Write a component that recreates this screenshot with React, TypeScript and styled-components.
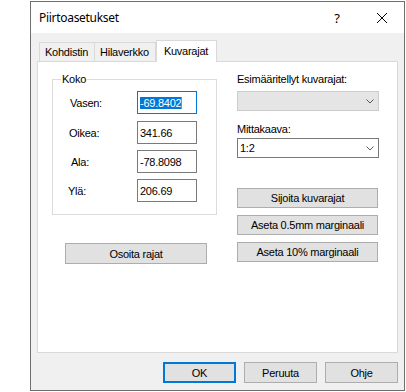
import React from 'react'
import styled, { createGlobalStyle } from 'styled-components'

const GlobalStyle = createGlobalStyle`
    html, body {
        margin: 0;
        padding: 0;
        background: #ffffff;
    }
    body {
        font-family: "Liberation Sans", Arial, sans-serif;
        font-size: 11px;
        letter-spacing: -0.25px;
        color: #000000;
    }
`

const Dialog = styled.div`
    margin: 1px 0 0 30px;
    width: 375px;
    height: 390px;
    box-sizing: border-box;
    border: 1px solid #6f6f6f;
    background: #f0f0f0;
    display: flex;
    flex-direction: column;
`

const TitleBar = styled.div`
    height: 31px;
    flex-shrink: 0;
    background: #ffffff;
    display: flex;
    align-items: center;
    padding-left: 8px;
    font-family: "Noto Sans", "Open Sans", sans-serif;
    font-size: 12px;
    letter-spacing: -0.3px;
`

const TitleText = styled.div`
    flex: 1;
    margin-top: -1px;
`

const TitleButton = styled.div<{ $width: number }>`
    width: ${p => p.$width}px;
    height: 31px;
    display: flex;
    align-items: center;
    justify-content: center;
    font-size: 13px;
`

const Body = styled.div`
    flex: 1;
    display: flex;
    flex-direction: column;
    padding: 7px 6px 0 6px;
`

const TabStrip = styled.div`
    display: flex;
    align-items: flex-end;
    height: 21px;
    padding-left: 2px;
`

const Tab = styled.div<{ $active?: boolean }>`
    height: ${p => (p.$active ? 22 : 19)}px;
    padding: 0 ${p => (p.$active ? 8 : 6)}px 0 ${p => (p.$active ? 7 : 5)}px;
    margin-bottom: ${p => (p.$active ? -1 : 0)}px;
    background: ${p => (p.$active ? '#ffffff' : '#f0f0f0')};
    border: 1px solid #d9d9d9;
    border-bottom: none;
    border-left: ${p => (p.$active ? '1px solid #d9d9d9' : 'none')};
    display: flex;
    align-items: ${p => (p.$active ? 'flex-start' : 'center')};
    padding-top: ${p => (p.$active ? 4 : 0)}px;
    box-sizing: border-box;
    position: relative;
    z-index: ${p => (p.$active ? 1 : 0)};
    &:first-child {
        border-left: 1px solid #d9d9d9;
    }
`

const Panel = styled.div`
    width: 361px;
    height: 292px;
    flex-shrink: 0;
    box-sizing: border-box;
    background: #ffffff;
    border: 1px solid #d9d9d9;
    display: grid;
    grid-template-columns: 185px 1fr;
    align-items: start;
    padding: 17px 0 0 14px;
`

const LeftColumn = styled.div`
    display: flex;
    flex-direction: column;
`

const Group = styled.div`
    width: 165px;
    height: 136px;
    box-sizing: border-box;
    border: 1px solid #dcdcdc;
    padding: 0 0 0 17px;
`

const Legend = styled.div`
    margin: -7px 0 0 -9px;
    padding: 0 1px;
    width: fit-content;
    background: #ffffff;
    line-height: 13px;
`

const FieldRow = styled.div<{ $gap: number }>`
    display: grid;
    grid-template-columns: 67px 60px;
    align-items: center;
    margin-top: ${p => p.$gap}px;
`

const FieldLabel = styled.div<{ $shift: number }>`
    margin-left: ${p => p.$shift}px;
`

const Field = styled.div<{ $focused?: boolean }>`
    height: 23px;
    box-sizing: border-box;
    border: 1px solid ${p => (p.$focused ? '#0078d7' : '#7a7a7a')};
    padding: 0 0 0 2px;
    display: flex;
    align-items: center;
`

const Selected = styled.span`
    background: #0078d7;
    color: #ffffff;
    border-right: 1px solid #e6791d;
    line-height: 12px;
`

const Button = styled.div<{ $width?: number; $height?: number; $default?: boolean }>`
    width: ${p => p.$width ?? 141}px;
    height: ${p => p.$height ?? 20}px;
    box-sizing: border-box;
    background: #e1e1e1;
    border: ${p => (p.$default ? '2px solid #0078d7' : '1px solid #adadad')};
    display: flex;
    align-items: center;
    justify-content: center;
`

const LeftButtonWrap = styled.div`
    margin: 28px 0 0 13px;
`

const RightColumn = styled.div`
    display: flex;
    flex-direction: column;
    margin-top: -6px;
`

const ComboLabel = styled.div<{ $gap?: number }>`
    line-height: 13px;
    margin-top: ${p => p.$gap ?? 0}px;
`

const Combo = styled.div<{ $disabled?: boolean; $gap: number }>`
    width: 142px;
    height: 20px;
    margin-top: ${p => p.$gap}px;
    box-sizing: border-box;
    background: ${p => (p.$disabled ? '#e5e5e5' : '#ffffff')};
    border: 1px solid ${p => (p.$disabled ? '#cccccc' : '#7a7a7a')};
    display: flex;
    align-items: center;
    justify-content: space-between;
    padding: 0 4px 0 2px;
`

const ButtonStack = styled.div`
    display: flex;
    flex-direction: column;
    gap: 7px;
    margin-top: 30px;
`

const Footer = styled.div`
    display: flex;
    justify-content: flex-end;
    gap: 8px;
    padding-top: 9px;
`

const Chevron = () => (
    <svg width="8" height="5" viewBox="0 0 8 5">
        <polyline points="0.5,0.5 4,4 7.5,0.5" fill="none" stroke="#5a5a5a" strokeWidth="1" />
    </svg>
)

const CloseIcon = () => (
    <svg width="10" height="10" viewBox="0 0 10 10">
        <line x1="0" y1="0" x2="10" y2="10" stroke="#000" strokeWidth="1" />
        <line x1="10" y1="0" x2="0" y2="10" stroke="#000" strokeWidth="1" />
    </svg>
)

const fields = [
    { label: 'Vasen:', value: '-69.8402', shift: 0, gap: 5, focused: true },
    { label: 'Oikea:', value: '341.66', shift: -1, gap: 7 },
    { label: 'Ala:', value: '-78.8098', shift: 1, gap: 6 },
    { label: 'Ylä:', value: '206.69', shift: -2, gap: 6 },
]

export default function App() {
    return (
        <>
            <GlobalStyle />
            <Dialog>
                <TitleBar>
                    <TitleText>Piirtoasetukset</TitleText>
                    <TitleButton $width={46}>?</TitleButton>
                    <TitleButton $width={44}><CloseIcon /></TitleButton>
                </TitleBar>
                <Body>
                    <TabStrip>
                        <Tab>Kohdistin</Tab>
                        <Tab>Hilaverkko</Tab>
                        <Tab $active>Kuvarajat</Tab>
                    </TabStrip>
                    <Panel>
                        <LeftColumn>
                            <Group>
                                <Legend>Koko</Legend>
                                {fields.map(f => (
                                    <FieldRow key={f.label} $gap={f.gap}>
                                        <FieldLabel $shift={f.shift}>{f.label}</FieldLabel>
                                        <Field $focused={f.focused}>
                                            {f.focused ? <Selected>{f.value}</Selected> : f.value}
                                        </Field>
                                    </FieldRow>
                                ))}
                            </Group>
                            <LeftButtonWrap>
                                <Button $width={142} $height={21}>Osoita rajat</Button>
                            </LeftButtonWrap>
                        </LeftColumn>
                        <RightColumn>
                            <ComboLabel>Esimääritellyt kuvarajat:</ComboLabel>
                            <Combo $disabled $gap={5}><span /><Chevron /></Combo>
                            <ComboLabel $gap={12}>Mittakaava:</ComboLabel>
                            <Combo $gap={2}><span>1:2</span><Chevron /></Combo>
                            <ButtonStack>
                                <Button>Sijoita kuvarajat</Button>
                                <Button>Aseta 0.5mm marginaali</Button>
                                <Button>Aseta 10% marginaali</Button>
                            </ButtonStack>
                        </RightColumn>
                    </Panel>
                    <Footer>
                        <Button $width={73} $height={21} $default>OK</Button>
                        <Button $width={73} $height={21}>Peruuta</Button>
                        <Button $width={73} $height={21}>Ohje</Button>
                    </Footer>
                </Body>
            </Dialog>
        </>
    )
}
